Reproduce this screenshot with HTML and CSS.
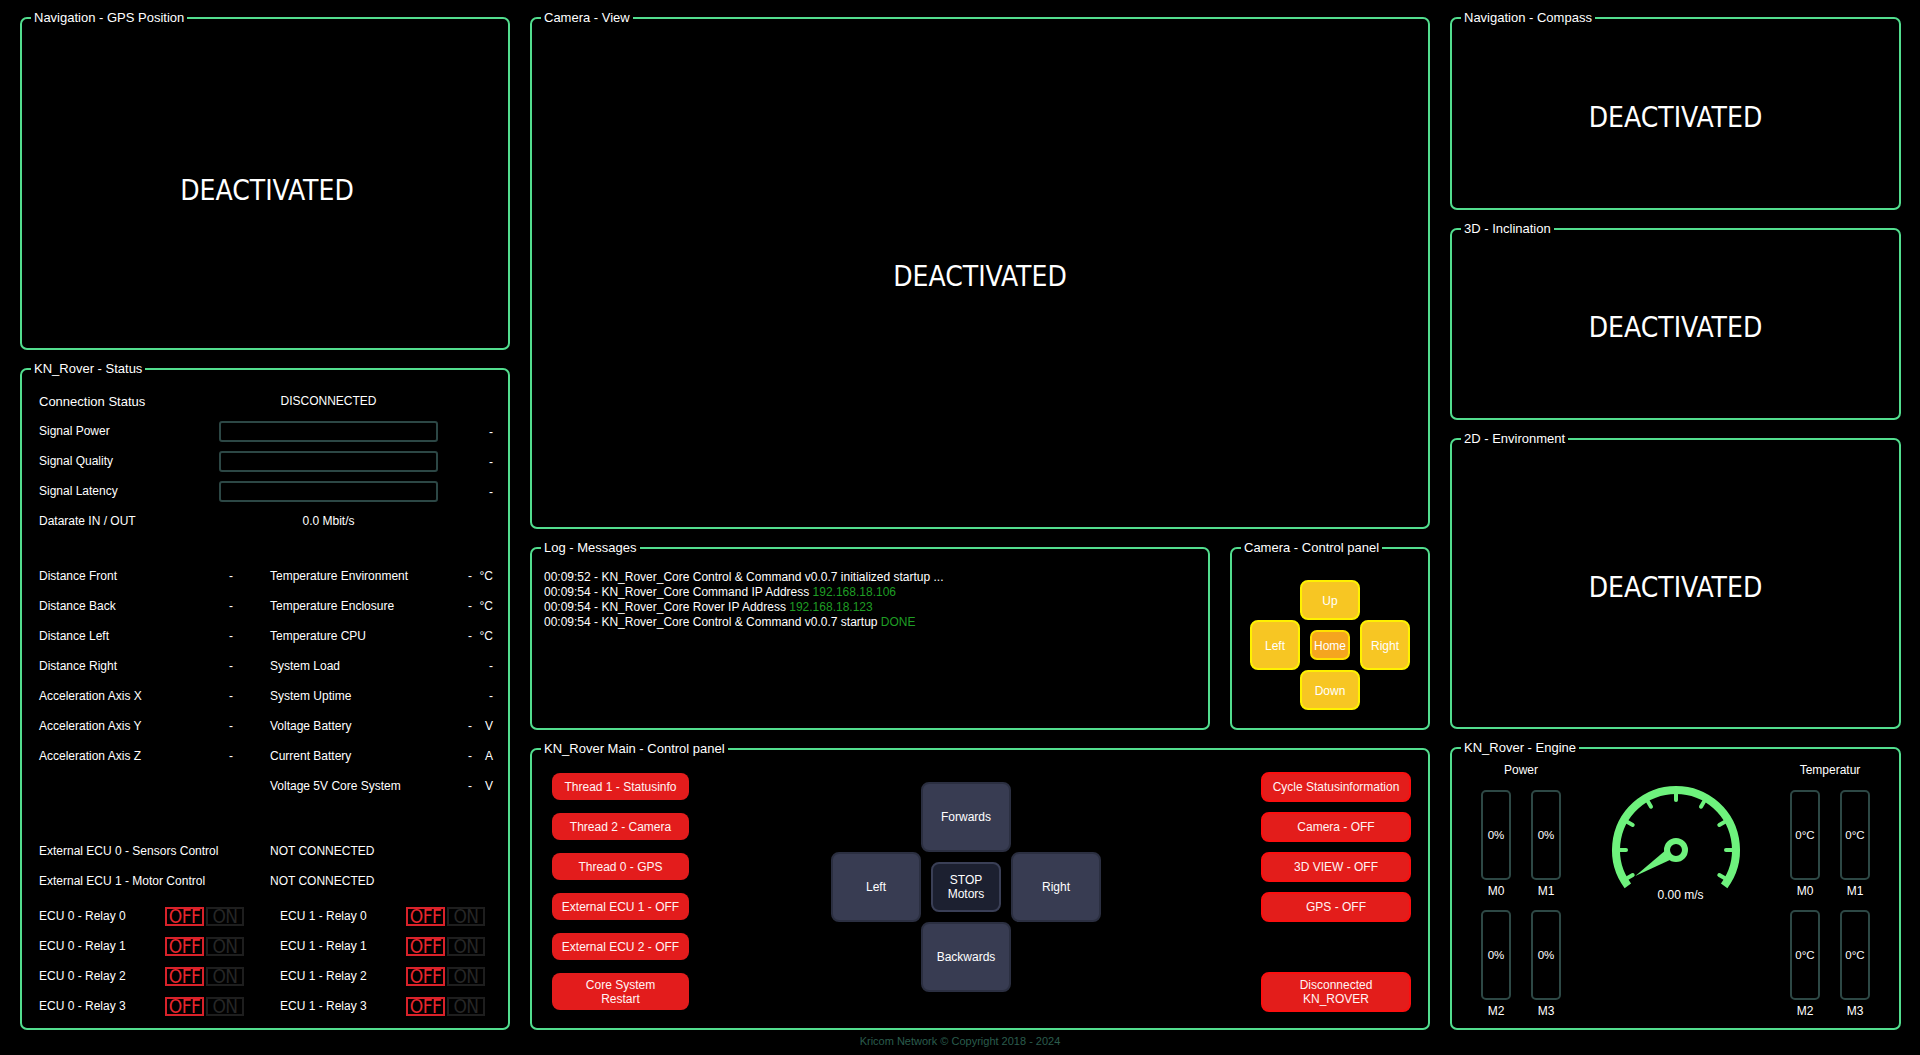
FILE: index.html
```html
<!DOCTYPE html>
<html lang="en">
<head>
<meta charset="utf-8">
<title>KN_Rover Core Control &amp; Command</title>
<link rel="stylesheet" href="styles.css">
</head>
<body>
<div class="app">
  <div class="col">
    <section class="panel p-gps deact-panel">
      <span class="ptitle">Navigation - GPS Position</span>
      <div class="deact">DEACTIVATED</div>
    </section>
    <section class="panel p-status">
      <span class="ptitle">KN_Rover - Status</span>
      <div class="st-row"><span class="lbl-lg">Connection Status</span><span class="center">DISCONNECTED</span><span></span></div>
      <div class="st-row"><span>Signal Power</span><div class="sbar"></div><span class="right dash">-</span></div>
      <div class="st-row"><span>Signal Quality</span><div class="sbar"></div><span class="right dash">-</span></div>
      <div class="st-row"><span>Signal Latency</span><div class="sbar"></div><span class="right dash">-</span></div>
      <div class="st-row"><span>Datarate IN / OUT</span><span class="center">0.0 Mbit/s</span><span></span></div>
      <div class="st-grid">
        <span>Distance Front</span><span class="right">-</span><span></span><span>Temperature Environment</span><span class="right">-</span><span class="right">°C</span>
        <span>Distance Back</span><span class="right">-</span><span></span><span>Temperature Enclosure</span><span class="right">-</span><span class="right">°C</span>
        <span>Distance Left</span><span class="right">-</span><span></span><span>Temperature CPU</span><span class="right">-</span><span class="right">°C</span>
        <span>Distance Right</span><span class="right">-</span><span></span><span>System Load</span><span></span><span class="right">-</span>
        <span>Acceleration Axis X</span><span class="right">-</span><span></span><span>System Uptime</span><span></span><span class="right">-</span>
        <span>Acceleration Axis Y</span><span class="right">-</span><span></span><span>Voltage Battery</span><span class="right">-</span><span class="right">V</span>
        <span>Acceleration Axis Z</span><span class="right">-</span><span></span><span>Current Battery</span><span class="right">-</span><span class="right">A</span>
        <span></span><span></span><span></span><span>Voltage 5V Core System</span><span class="right">-</span><span class="right">V</span>
      </div>
      <div class="ecu">
        <span>External ECU 0 - Sensors Control</span><span>NOT CONNECTED</span>
        <span>External ECU 1 - Motor Control</span><span>NOT CONNECTED</span>
      </div>
      <div class="relays">
        <div class="relay"><span class="rl">ECU 0 - Relay 0</span><span class="tog off">OFF</span><span class="tog on">ON</span></div>
        <div class="relay"><span class="rl">ECU 1 - Relay 0</span><span class="tog off">OFF</span><span class="tog on">ON</span></div>
        <div class="relay"><span class="rl">ECU 0 - Relay 1</span><span class="tog off">OFF</span><span class="tog on">ON</span></div>
        <div class="relay"><span class="rl">ECU 1 - Relay 1</span><span class="tog off">OFF</span><span class="tog on">ON</span></div>
        <div class="relay"><span class="rl">ECU 0 - Relay 2</span><span class="tog off">OFF</span><span class="tog on">ON</span></div>
        <div class="relay"><span class="rl">ECU 1 - Relay 2</span><span class="tog off">OFF</span><span class="tog on">ON</span></div>
        <div class="relay"><span class="rl">ECU 0 - Relay 3</span><span class="tog off">OFF</span><span class="tog on">ON</span></div>
        <div class="relay"><span class="rl">ECU 1 - Relay 3</span><span class="tog off">OFF</span><span class="tog on">ON</span></div>
      </div>
    </section>
  </div>

  <div class="col">
    <section class="panel p-camera deact-panel">
      <span class="ptitle">Camera - View</span>
      <div class="deact">DEACTIVATED</div>
    </section>
    <div class="mid-row">
      <section class="panel p-log">
        <span class="ptitle">Log - Messages</span>
        <div class="logline">00:09:52 - KN_Rover_Core Control &amp; Command v0.0.7 initialized startup ...</div>
        <div class="logline">00:09:54 - KN_Rover_Core Command IP Address <span class="ok">192.168.18.106</span></div>
        <div class="logline">00:09:54 - KN_Rover_Core Rover IP Address <span class="ok">192.168.18.123</span></div>
        <div class="logline">00:09:54 - KN_Rover_Core Control &amp; Command v0.0.7 startup <span class="ok">DONE</span></div>
      </section>
      <section class="panel p-camctl">
        <span class="ptitle">Camera - Control panel</span>
        <div class="cpad">
          <div class="ybtn c-up">Up</div>
          <div class="ybtn c-left">Left</div>
          <div class="ybtn home c-home">Home</div>
          <div class="ybtn c-right">Right</div>
          <div class="ybtn c-down">Down</div>
        </div>
      </section>
    </div>
    <section class="panel p-main">
      <span class="ptitle">KN_Rover Main - Control panel</span>
      <div class="mc-left">
        <div class="rbtn">Thread 1 - Statusinfo</div>
        <div class="rbtn">Thread 2 - Camera</div>
        <div class="rbtn">Thread 0 - GPS</div>
        <div class="rbtn">External ECU 1 - OFF</div>
        <div class="rbtn">External ECU 2 - OFF</div>
        <div class="rbtn tall">Core System<br>Restart</div>
      </div>
      <div class="dpad">
        <div class="dbtn d-fwd">Forwards</div>
        <div class="dbtn d-left">Left</div>
        <div class="dbtn stop">STOP<br>Motors</div>
        <div class="dbtn d-right">Right</div>
        <div class="dbtn d-back">Backwards</div>
      </div>
      <div class="mc-right">
        <div class="rbtn bord">Cycle Statusinformation</div>
        <div class="rbtn bord">Camera - OFF</div>
        <div class="rbtn bord">3D VIEW - OFF</div>
        <div class="rbtn bord">GPS - OFF</div>
        <div class="rbtn bord tall2">Disconnected<br>KN_ROVER</div>
      </div>
    </section>
  </div>

  <div class="col">
    <section class="panel p-compass deact-panel">
      <span class="ptitle">Navigation - Compass</span>
      <div class="deact">DEACTIVATED</div>
    </section>
    <section class="panel p-incl deact-panel">
      <span class="ptitle">3D - Inclination</span>
      <div class="deact">DEACTIVATED</div>
    </section>
    <section class="panel p-env deact-panel">
      <span class="ptitle">2D - Environment</span>
      <div class="deact">DEACTIVATED</div>
    </section>
    <section class="panel p-engine">
      <span class="ptitle">KN_Rover - Engine</span>
      <div class="eng-group">
        <div class="eng-head">Power</div>
        <div class="eng-grid">
          <div class="ecell"><div class="ebar">0%</div><div class="elbl">M0</div></div>
          <div class="ecell"><div class="ebar">0%</div><div class="elbl">M1</div></div>
          <div class="ecell"><div class="ebar">0%</div><div class="elbl">M2</div></div>
          <div class="ecell"><div class="ebar">0%</div><div class="elbl">M3</div></div>
        </div>
      </div>
      <div class="eng-gauge">
        <svg class="gauge" width="140" height="108" viewBox="0 0 140 108">
          <path d="M21.83 105.77 A60 60 0 1 1 118.17 105.77" fill="none" stroke="#6ef27d" stroke-width="8"/>
          <g stroke="#6ef27d" stroke-width="4" stroke-linecap="round">
            <line x1="20.64" y1="98.5" x2="26.7" y2="95"/>
            <line x1="13" y1="70" x2="20" y2="70"/>
            <line x1="20.64" y1="41.5" x2="26.7" y2="45"/>
            <line x1="41.5" y1="20.64" x2="45" y2="26.7"/>
            <line x1="70" y1="13" x2="70" y2="20"/>
            <line x1="98.5" y1="20.64" x2="95" y2="26.7"/>
            <line x1="119.36" y1="41.5" x2="113.3" y2="45"/>
            <line x1="127" y1="70" x2="120" y2="70"/>
            <line x1="119.36" y1="98.5" x2="113.3" y2="95"/>
          </g>
          <polygon points="29.3,96 73.6,75.4 66.4,64.6" fill="#6ef27d"/>
          <circle cx="70" cy="70" r="9" fill="#000" stroke="#6ef27d" stroke-width="6"/>
        </svg>
        <div class="speed">0.00 m/s</div>
      </div>
      <div class="eng-group">
        <div class="eng-head">Temperatur</div>
        <div class="eng-grid">
          <div class="ecell"><div class="ebar">0°C</div><div class="elbl">M0</div></div>
          <div class="ecell"><div class="ebar">0°C</div><div class="elbl">M1</div></div>
          <div class="ecell"><div class="ebar">0°C</div><div class="elbl">M2</div></div>
          <div class="ecell"><div class="ebar">0°C</div><div class="elbl">M3</div></div>
        </div>
      </div>
    </section>
  </div>
</div>
<footer class="footer">Kricom Network © Copyright 2018 - 2024</footer>
</body>
</html>
```

FILE: styles.css
```css
html, body {
  margin: 0;
  padding: 0;
  background: #000;
}
body {
  width: 1920px;
  height: 1055px;
  overflow: hidden;
  color: #fff;
  font-family: "Liberation Sans", Arial, sans-serif;
  font-size: 12px;
  line-height: 15px;
}

.app {
  display: grid;
  grid-template-columns: 490px 900px 451px;
  column-gap: 20px;
  padding: 17px 0 0 20px;
  align-items: start;
}
.col {
  display: flex;
  flex-direction: column;
  gap: 18px;
}

.panel {
  position: relative;
  box-sizing: border-box;
  border: 2px solid #52dd8e;
  border-radius: 7px;
}
.ptitle {
  position: absolute;
  top: -9px;
  left: 9px;
  padding: 0 3px;
  background: #000;
  color: #fff;
  font-size: 13px;
  line-height: 16px;
  white-space: nowrap;
}

.deact-panel {
  display: flex;
  align-items: center;
  justify-content: center;
  padding-top: 8px;
}
.p-gps.deact-panel { padding-top: 15px; padding-left: 4px; }
.deact {
  font-family: "Liberation Sans Narrow", "DejaVu Sans Condensed", "Liberation Sans", sans-serif;
  font-size: 28px;
  line-height: 34px;
  color: #fff;
}

/* heights */
.p-gps { height: 333px; }
.p-status { height: 662px; padding: 16px 15px 0 17px; }
.p-camera { height: 512px; }
.mid-row { display: flex; gap: 20px; height: 183px; }
.p-main { height: 282px; }
.p-compass { height: 193px; }
.p-incl { height: 192px; }
.p-env { height: 291px; }
.p-engine { height: 283px; }

/* status */
.st-row {
  display: grid;
  grid-template-columns: 180px 219px 1fr;
  align-items: center;
  height: 30px;
}
.lbl-lg { font-size: 13px; }
.center { text-align: center; }
.right { text-align: right; }
.dash { padding-top: 3px; }
.sbar {
  box-sizing: border-box;
  height: 21px;
  border: 2px solid #2c4745;
  border-radius: 3px;
}
.st-grid {
  margin-top: 25px;
  display: grid;
  grid-template-columns: 181px 13px 37px 190px 12px 21px;
  grid-auto-rows: 30px;
  align-items: center;
}
.ecu {
  margin-top: 35px;
  display: grid;
  grid-template-columns: 231px 1fr;
  grid-auto-rows: 30px;
  align-items: center;
}
.relays {
  margin-top: 5px;
  display: grid;
  grid-template-columns: 205px 205px;
  column-gap: 36px;
  grid-auto-rows: 30px;
  align-items: center;
}
.relay {
  display: flex;
  align-items: center;
}
.rl { width: 126px; }
.tog {
  box-sizing: border-box;
  height: 19px;
  border: 2px solid;
  font-family: "Liberation Sans Narrow", "DejaVu Sans Condensed", "Liberation Sans", sans-serif;
  font-size: 19px;
  letter-spacing: -0.5px;
  line-height: 15px;
  text-align: center;
  white-space: nowrap;
}
.tog.off { width: 39px; border-color: #d8222a; color: #e8262e; margin-right: 2px; }
.tog.on { width: 38px; border-color: #1e1e1e; color: #262626; }

/* log */
.p-log {
  flex: 0 0 680px;
  padding: 21px 10px 0 12px;
}
.logline { line-height: 15px; white-space: nowrap; }
.ok { color: #1f9e24; }

/* camera control */
.p-camctl {
  flex: 1;
  display: flex;
  justify-content: center;
  padding-top: 31px;
}
.cpad {
  display: grid;
  grid-template-columns: 50px 60px 50px;
  grid-template-rows: 40px 50px 40px;
}
.ybtn {
  box-sizing: border-box;
  display: flex;
  align-items: center;
  justify-content: center;
  padding-top: 2px;
  background: #f7c623;
  border: 2px solid #fff200;
  border-radius: 8px;
  color: #fff;
}
.ybtn.home {
  background: #f5a51f;
  border-color: #ffe100;
  width: 40px;
  height: 30px;
  justify-self: center;
  align-self: center;
  border-radius: 7px;
}
.c-up { grid-column: 2; grid-row: 1; }
.c-left { grid-column: 1; grid-row: 2; }
.c-home { grid-column: 2; grid-row: 2; }
.c-right { grid-column: 3; grid-row: 2; }
.c-down { grid-column: 2; grid-row: 3; }

/* main control */
.p-main {
  display: flex;
  align-items: flex-start;
  padding: 23px 17px 0 20px;
}
.mc-left {
  display: flex;
  flex-direction: column;
  gap: 13px;
}
.rbtn {
  box-sizing: border-box;
  display: flex;
  align-items: center;
  justify-content: center;
  text-align: center;
  width: 137px;
  height: 27px;
  background: #e31c1c;
  border-radius: 8px;
  color: #fff4f4;
  line-height: 14px;
}
.rbtn.tall { height: 37px; }
.mc-right {
  margin-left: auto;
  margin-top: -1px;
  display: flex;
  flex-direction: column;
  gap: 10px;
}
.rbtn.bord {
  width: 150px;
  height: 30px;
  border: 2px solid #fb0f0f;
  background: #e31d1b;
}
.rbtn.tall2 { height: 40px; margin-top: 40px; }

.dpad {
  margin-left: 142px;
  margin-top: 9px;
  display: grid;
  grid-template-columns: 90px 90px 90px;
  grid-template-rows: 70px 70px 70px;
}
.dbtn {
  box-sizing: border-box;
  display: flex;
  align-items: center;
  justify-content: center;
  text-align: center;
  background: #383c52;
  border: 2px solid #2b2f41;
  border-radius: 8px;
  color: #fff;
  line-height: 14px;
}
.d-fwd { grid-column: 2; grid-row: 1; }
.d-left { grid-column: 1; grid-row: 2; }
.d-right { grid-column: 3; grid-row: 2; }
.d-back { grid-column: 2; grid-row: 3; }
.dbtn.stop {
  grid-column: 2;
  grid-row: 2;
  width: 70px;
  height: 50px;
  justify-self: center;
  align-self: center;
  background: #1c2030;
  border-color: #3a3f56;
}

/* engine */
.p-engine {
  display: flex;
  justify-content: space-between;
  align-items: flex-start;
  padding: 14px 29px 0 29px;
}
.eng-group {
  width: 80px;
  display: flex;
  flex-direction: column;
  align-items: center;
}
.eng-head {
  line-height: 15px;
  margin-bottom: 12px;
  white-space: nowrap;
}
.eng-grid {
  display: grid;
  grid-template-columns: 30px 30px;
  column-gap: 20px;
  row-gap: 11px;
}
.ecell {
  display: flex;
  flex-direction: column;
  align-items: center;
}
.ebar {
  box-sizing: border-box;
  width: 30px;
  height: 90px;
  border: 2px solid #2d4845;
  border-radius: 5px;
  display: flex;
  align-items: center;
  justify-content: center;
  white-space: nowrap;
  font-size: 11.5px;
}
.elbl {
  margin-top: 4px;
  line-height: 15px;
}
.eng-gauge {
  width: 140px;
  margin-top: 17px;
}
.gauge {
  display: block;
  overflow: visible;
}
.speed {
  text-align: center;
  padding-left: 10px;
  line-height: 15px;
}

.footer {
  padding-top: 4px;
  text-align: center;
  font-size: 11px;
  line-height: 15px;
  color: #2b5c4d;
}
```
